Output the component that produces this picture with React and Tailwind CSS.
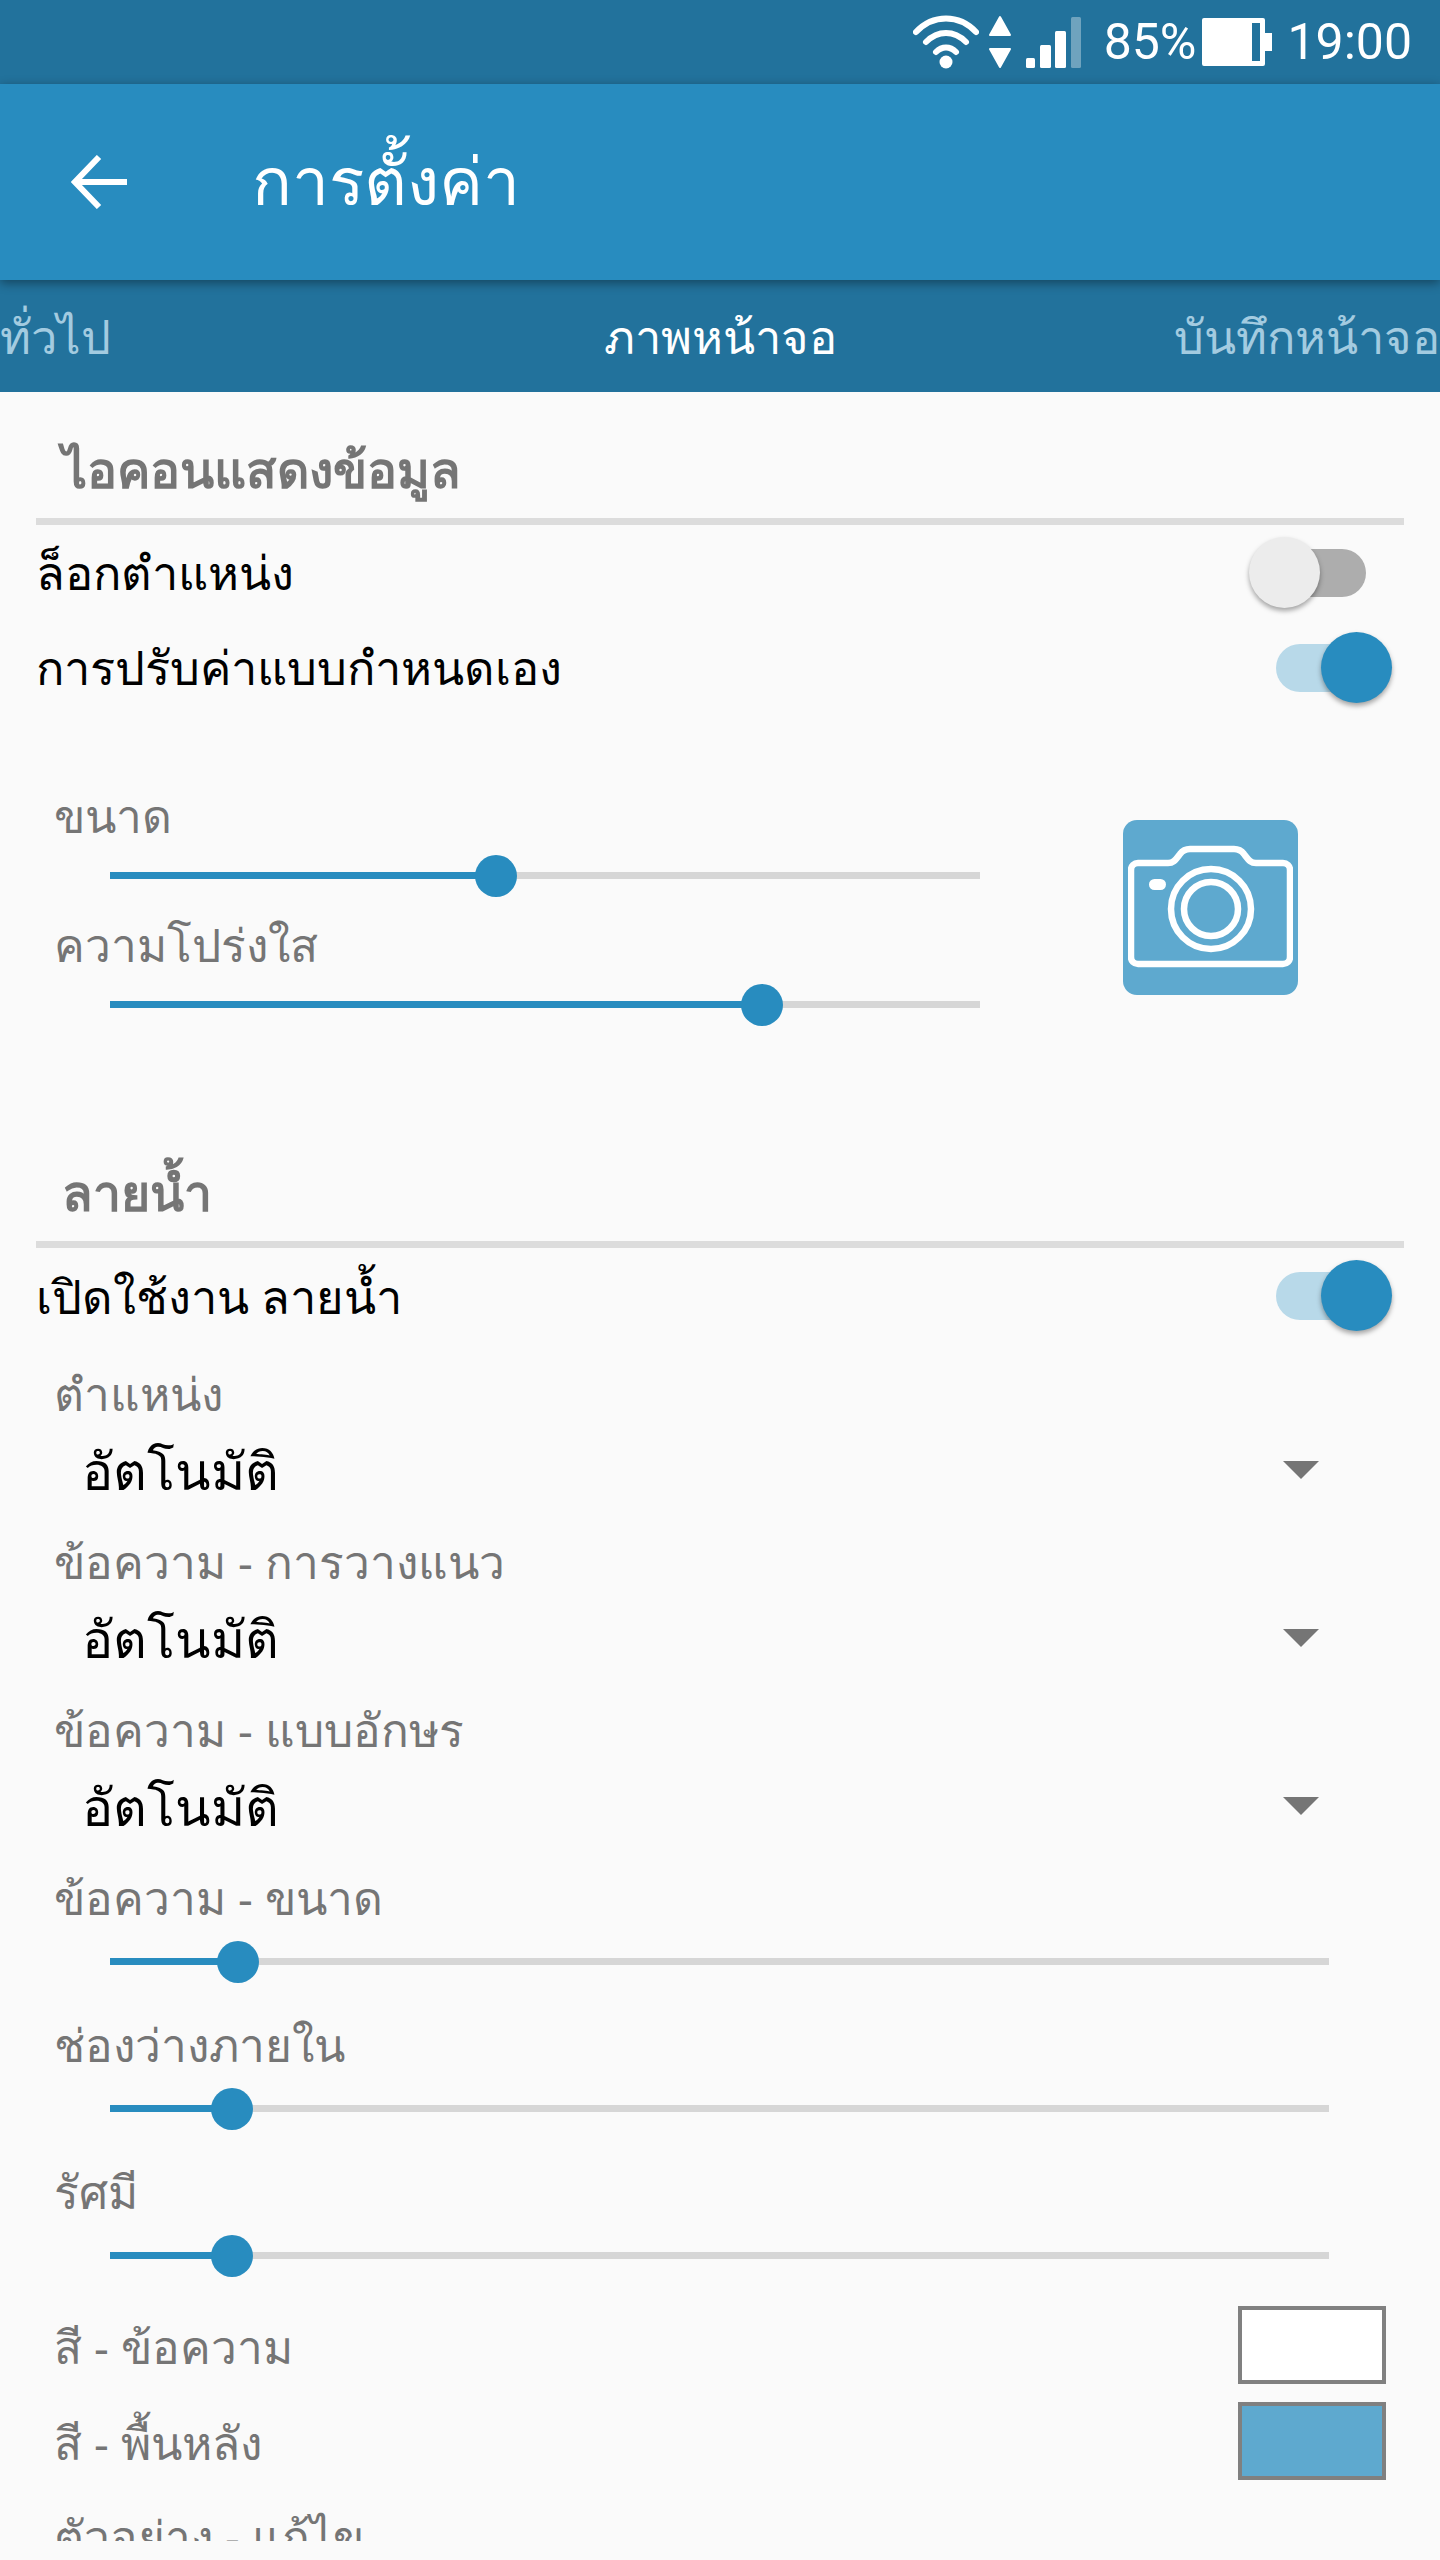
import React from "react";

const thai = { fontFamily: '"Noto Sans", "Liberation Sans", sans-serif' };

function Toggle({ on }) {
  return (
    <div className="relative w-[144px] h-[72px] shrink-0">
      <div className="absolute left-[28px] top-[12px] w-[90px] h-[48px] rounded-full bg-[#adadad]" style={on ? { background: "#b8d9e9" } : undefined} />
      <div
        className={`absolute top-0 w-[71px] h-[71px] rounded-full shadow-[0_3px_5px_rgba(0,0,0,0.35)] ${on ? "left-[73px] bg-[#288cbf]" : "left-[1px] bg-[#ececec]"}`}
      />
    </div>
  );
}

function Slider({ width, thumb }) {
  return (
    <div className="relative h-[7px] bg-[#d6d6d6]" style={{ width }}>
      <div className="absolute left-0 top-0 h-[7px] bg-[#288cbf]" style={{ width: thumb }} />
      <div className="absolute top-[-17px] ml-[-21px] w-[42px] h-[42px] rounded-full bg-[#288cbf]" style={{ left: thumb }} />
    </div>
  );
}

function Label({ children, cls = "" }) {
  return (
    <div className={`flex items-center h-[64px] pl-[54px] text-[46px] leading-none text-[#757575] whitespace-nowrap ${cls}`}>
      {children}
    </div>
  );
}

function SectionTitle({ children }) {
  return (
    <div className="mx-[36px]">
      <div className="flex items-end h-[126px] pl-[26px] pb-[24px] text-[50px] leading-none font-bold text-[#757575]">
        {children}
      </div>
      <div className="h-[7px] bg-[#dcdcdc]" />
    </div>
  );
}

function SwitchRow({ children, on, h }) {
  return (
    <div className="flex items-center justify-between pl-[36px] pr-[48px] text-[47px] leading-none text-black" style={{ height: h }}>
      <span className="whitespace-nowrap">{children}</span>
      <Toggle on={on} />
    </div>
  );
}

function Dropdown({ label }) {
  return (
    <div>
      <Label>{label}</Label>
      <div className="flex items-center justify-between h-[104px] pb-[14px] pl-[82px] pr-[121px] text-[52px] leading-none text-black">
        <span>อัตโนมัติ</span>
        <svg width="36" height="18" viewBox="0 0 36 18"><path d="M0 0h36L18 18z" fill="#757575" /></svg>
      </div>
    </div>
  );
}

function Swatch({ label, color }) {
  return (
    <div className="flex items-center justify-between h-[96px] px-[54px] text-[46px] leading-none text-[#757575]">
      <span className="pt-[1px]">{label}</span>
      <div className="w-[148px] h-[78px] border-[4px] border-[#808080]" style={{ background: color }} />
    </div>
  );
}

function StatusBar() {
  return (
    <div className="relative h-[84px] bg-[#22729c] flex items-center justify-end pr-[28px] text-white">
      <svg width="66" height="54" viewBox="0 0 66 54" className="mr-[10px]" fill="none" stroke="#fff" strokeWidth="6" strokeLinecap="round">
        <path d="M3 17 C20 -1 46 -1 63 17" />
        <path d="M13 27 C25 15 41 15 53 27" />
        <path d="M23 37 C29 31 37 31 43 37" />
        <circle cx="33" cy="47" r="6.5" fill="#fff" stroke="none" />
      </svg>
      <svg width="22" height="54" viewBox="0 0 22 54" className="mr-[15px]" fill="#fff" stroke="#fff" strokeWidth="2" strokeLinejoin="round">
        <path d="M11 2 L21 20 H1 Z" />
        <path d="M1 34 H21 L11 52 Z" />
      </svg>
      <svg width="55" height="54" viewBox="0 0 55 54" className="mr-[23px]">
        <rect x="0" y="43" width="9" height="10" rx="1.5" fill="#fff" />
        <rect x="14" y="30" width="11" height="23" rx="1.5" fill="#fff" />
        <rect x="29" y="16" width="11" height="37" rx="1.5" fill="#fff" />
        <rect x="45" y="2" width="10" height="51" rx="1.5" fill="#fff" fillOpacity="0.35" />
      </svg>
      <span className="text-[50px] leading-none mr-[6px]" style={{ fontFamily: "Roboto, sans-serif" }}>85%</span>
      <svg width="70" height="48" viewBox="0 0 70 48" className="mr-[15px]">
        <path d="M2 0 H61 a2 2 0 0 1 2 2 V15 H70 V33 H63 V46 a2 2 0 0 1 -2 2 H2 a2 2 0 0 1 -2 -2 V2 a2 2 0 0 1 2 -2 Z" fill="#fff" />
        <rect x="50" y="5" width="8" height="38" fill="#22729c" />
      </svg>
      <span className="text-[50px] leading-none" style={{ fontFamily: "Roboto, sans-serif" }}>19:00</span>
    </div>
  );
}

function Camera() {
  return (
    <div className="w-[175px] h-[175px] rounded-[14px] bg-[#5ea9cf] flex items-center justify-center">
      <svg width="165" height="125" viewBox="0 0 165 125" fill="none" stroke="#fff" strokeWidth="6.5" strokeLinejoin="round">
        <path d="M10 18 H40 C46 18 48 14 52 9 C55 5 58 4 62 4 H106 C110 4 113 5 116 9 C120 14 122 18 128 18 H155 C159 18 162 21 162 25 V112 C162 116 159 119 155 119 H10 C6 119 3 116 3 112 V25 C3 21 6 18 10 18 Z" />
        <circle cx="83" cy="64" r="40" />
        <circle cx="83" cy="64" r="27" />
        <rect x="21" y="34" width="17" height="11" rx="5.5" fill="#fff" stroke="none" />
      </svg>
    </div>
  );
}

export default function App() {
  return (
    <div className="w-[1440px] h-[2560px] bg-[#fafafa] overflow-hidden" style={thai}>
      <StatusBar />
      <div className="relative z-10 h-[196px] bg-[#288cbf] flex items-center text-white shadow-[0_3px_10px_rgba(0,0,0,0.4)]">
        <svg width="56" height="54" viewBox="0 0 56 54" className="ml-[71px]" fill="none" stroke="#fff" strokeWidth="6">
          <path d="M56 27 H4" />
          <path d="M28 2 L4 27 L28 52" />
        </svg>
        <span className="ml-[125px] mb-[6px] text-[66px] leading-none">การตั้งค่า</span>
      </div>
      <div className="grid grid-cols-3 items-center h-[112px] bg-[#22729c] text-[47px] leading-none whitespace-nowrap">
        <span className="text-[#a3cbe0] text-left">ทั่วไป</span>
        <span className="text-white text-center">ภาพหน้าจอ</span>
        <span className="text-[#a3cbe0] text-right">บันทึกหน้าจอ</span>
      </div>

      <div className="h-[2149px] overflow-hidden">
        <SectionTitle>ไอคอนแสดงข้อมูล</SectionTitle>
        <SwitchRow h={95} on={false}>ล็อกตำแหน่ง</SwitchRow>
        <SwitchRow h={95} on>การปรับค่าแบบกำหนดเอง</SwitchRow>

        <div className="flex h-[400px]">
          <div className="w-[1123px] pt-[68px]">
            <Label>ขนาด</Label>
            <div className="pl-[110px] h-[65px] pt-[25px]"><Slider width={870} thumb={386} /></div>
            <Label>ความโปร่งใส</Label>
            <div className="pl-[110px] pt-[25px]"><Slider width={870} thumb={652} /></div>
          </div>
          <div className="pt-[105px]"><Camera /></div>
        </div>

        <SectionTitle>ลายน้ำ</SectionTitle>
        <SwitchRow h={96} on>เปิดใช้งาน ลายน้ำ</SwitchRow>

        <div className="mt-[17px]">
          <Dropdown label="ตำแหน่ง" />
          <Dropdown label="ข้อความ - การวางแนว" />
          <Dropdown label="ข้อความ - แบบอักษร" />
        </div>

        <Label>ข้อความ - ขนาด</Label>
        <div className="pl-[110px] h-[83px] pt-[29px]"><Slider width={1219} thumb={128} /></div>
        <Label>ช่องว่างภายใน</Label>
        <div className="pl-[110px] h-[83px] pt-[29px]"><Slider width={1219} thumb={122} /></div>
        <Label>รัศมี</Label>
        <div className="pl-[110px] h-[74px] pt-[29px]"><Slider width={1219} thumb={122} /></div>

        <Swatch label="สี - ข้อความ" color="#ffffff" />
        <Swatch label="สี - พื้นหลัง" color="#5ea9cf" />
        <Label cls="mt-[15px]">ตัวอย่าง - แก้ไข</Label>
      </div>
    </div>
  );
}
